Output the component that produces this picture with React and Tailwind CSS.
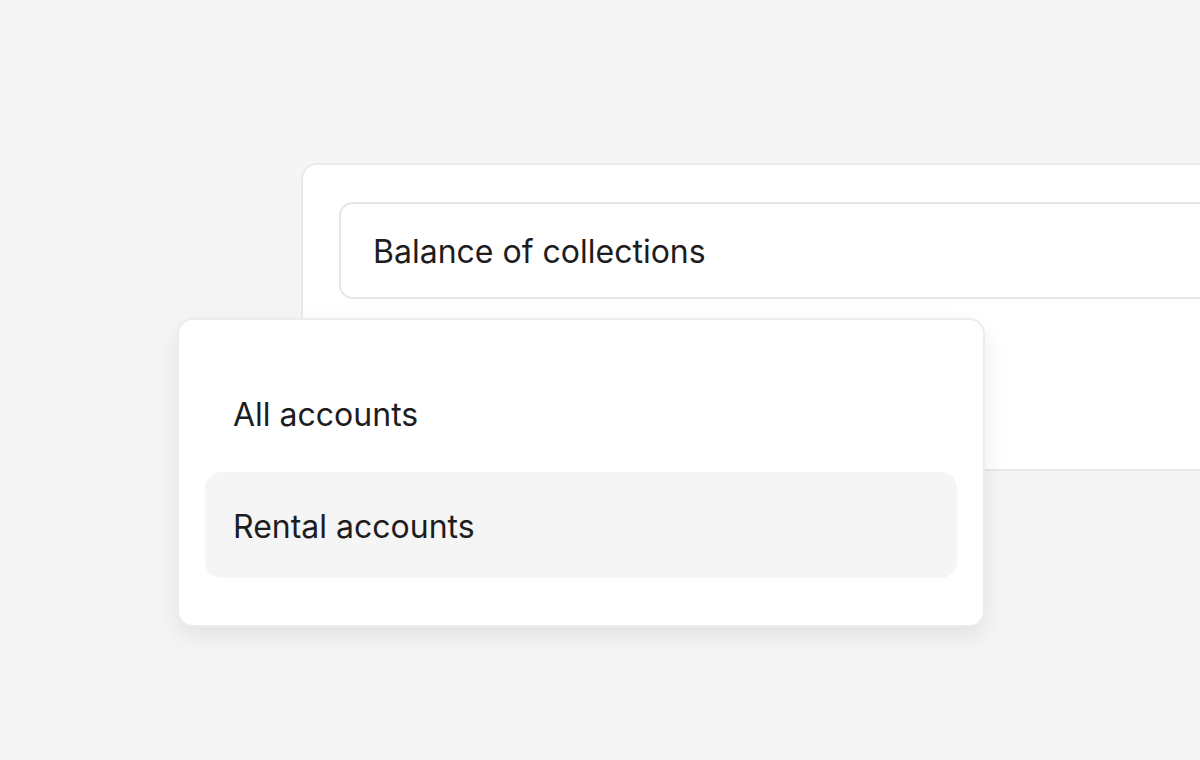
export default function App() {
  const items = [
    { label: "All accounts", active: false },
    { label: "Rental accounts", active: true },
  ];

  return (
    <div
      className="relative w-[1200px] h-[760px] overflow-hidden bg-[#f5f5f5] text-[#1d1d21]"
      style={{ fontFamily: "Inter, 'Noto Sans', sans-serif" }}
    >
      {/* back card */}
      <div className="ml-[301px] mt-[163px] w-[960px] h-[308px] rounded-[16px] border-2 border-[#e9e9e9] bg-white pl-[36px] pt-[37px]">
        <div className="flex items-center h-[97px] rounded-[14px] border-2 border-[#e6e6e6] bg-white pl-[32px] pt-[2px]">
          <span className="text-[32px] leading-none">Balance of collections</span>
        </div>
      </div>

      {/* dropdown */}
      <div className="absolute left-[177px] top-[318px] w-[808px] h-[309px] rounded-[16px] border-2 border-[#ececec] bg-white px-[26px] pt-[40px] shadow-[0_10px_24px_rgba(0,0,0,0.08)]">
        <div className="flex flex-col gap-[6px]">
          {items.map((it) => (
            <div
              key={it.label}
              className={`flex items-center h-[106px] rounded-[16px] px-[28px] pt-[4px] ${it.active ? "bg-[#f5f5f5]" : ""}`}
            >
              <span className="text-[32px] leading-none">{it.label}</span>
            </div>
          ))}
        </div>
      </div>
    </div>
  );
}
